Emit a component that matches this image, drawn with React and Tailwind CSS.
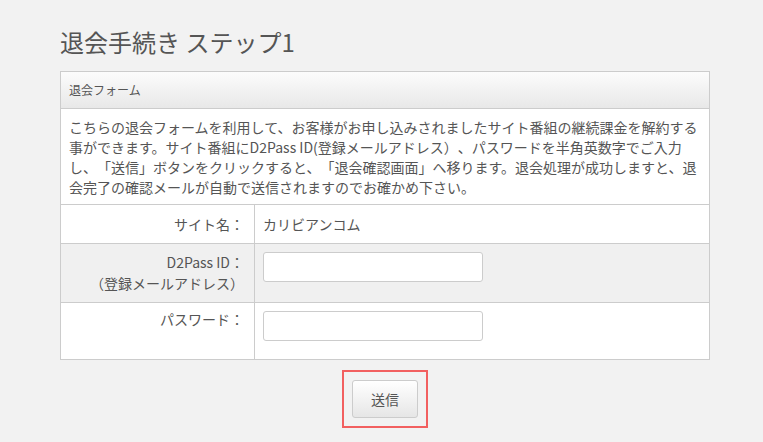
import React from 'react';

const descLines = [
  'こちらの退会フォームを利用して、お客様がお申し込みされましたサイト番組の継続課金を解約する',
  '事ができます。サイト番組にD2Pass ID(登録メールアドレス）、パスワードを半角英数字でご入力',
  'し、「送信」ボタンをクリックすると、「退会確認画面」へ移ります。退会処理が成功しますと、退',
  '会完了の確認メールが自動で送信されますのでお確かめ下さい。',
];

export default function App() {
  return (
    <div className="min-h-screen bg-[#f2f2f2] text-[#555] font-['Noto_Sans_CJK_JP','Noto_Sans',sans-serif] [text-spacing-trim:space-all]">
      <div className="ml-[60px] w-[650px] pt-[26px]">
        {/* Title */}
        <h1 className="text-[24px] leading-[32px] font-normal text-[#555] mb-[13px] whitespace-nowrap">
          退会手続き ステップ1
        </h1>

        {/* Form box */}
        <div className="border border-[#cccccc] bg-white">
          <div className="h-[37px] flex items-center pl-[8px] text-[12px] bg-gradient-to-b from-[#fcfcfc] to-[#e8e8e8] border-b border-[#cccccc]">
            退会フォーム
          </div>

          <div className="h-[96px] pl-[8px] pt-[8px] text-[14px] leading-[20px] border-b border-[#cccccc]">
            {descLines.map((line) => (
              <div key={line} className="whitespace-nowrap">{line}</div>
            ))}
          </div>

          {/* Site name */}
          <div className="flex h-[39px] border-b border-[#cccccc] text-[14px]">
            <div className="w-[194px] shrink-0 flex items-center justify-end pr-[10px] border-r border-[#cccccc]">
              サイト名：
            </div>
            <div className="flex items-center pl-[8px]">カリビアンコム</div>
          </div>

          {/* D2Pass ID */}
          <div className="flex h-[59px] border-b border-[#cccccc] bg-[#f0f0f0] text-[14px]">
            <div className="w-[194px] shrink-0 text-right pr-[10px] pt-[8px] leading-[21px] border-r border-[#cccccc]">
              <div>D2Pass ID：</div>
              <div>（登録メールアドレス）</div>
            </div>
            <div className="pl-[8px] pt-[8px]">
              <input type="text" className="w-[220px] h-[30px] bg-white border border-[#cccccc] rounded-[3px] outline-none px-2" />
            </div>
          </div>

          {/* Password */}
          <div className="flex h-[56px] text-[14px]">
            <div className="w-[194px] shrink-0 text-right pr-[10px] pt-[6px] leading-[21px] border-r border-[#cccccc]">
              パスワード：
            </div>
            <div className="pl-[8px] pt-[8px]">
              <input type="password" className="w-[220px] h-[30px] bg-white border border-[#cccccc] rounded-[3px] outline-none px-2" />
            </div>
          </div>
        </div>

        {/* Submit */}
        <div className="flex justify-center mt-[10px]">
          <div className="border-2 border-[#f26060] p-[8px]">
            <button className="w-[66px] h-[38px] text-[14px] text-[#555] rounded-[3px] border border-[#cccccc] bg-gradient-to-b from-[#ffffff] to-[#e6e6e6]">
              送信
            </button>
          </div>
        </div>
      </div>
    </div>
  );
}
